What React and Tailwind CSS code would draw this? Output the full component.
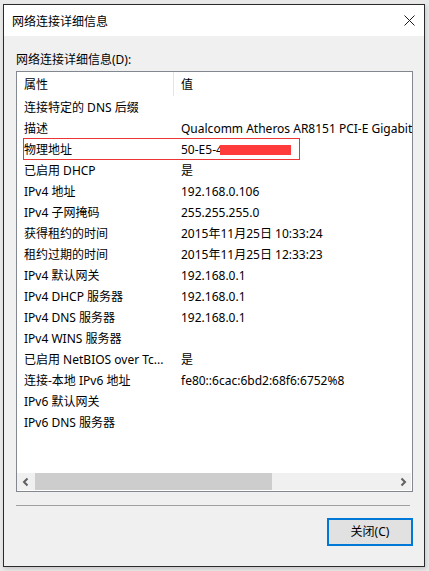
import React from "react";

const rows = [
  ["连接特定的 DNS 后缀", ""],
  ["描述", "Qualcomm Atheros AR8151 PCI-E Gigabit Ethernet Controller (NDIS 6.30)"],
  ["物理地址", "50-E5-4", "mac"],
  ["已启用 DHCP", "是"],
  ["IPv4 地址", "192.168.0.106"],
  ["IPv4 子网掩码", "255.255.255.0"],
  ["获得租约的时间", "2015年11月25日 10:33:24"],
  ["租约过期的时间", "2015年11月25日 12:33:23"],
  ["IPv4 默认网关", "192.168.0.1"],
  ["IPv4 DHCP 服务器", "192.168.0.1"],
  ["IPv4 DNS 服务器", "192.168.0.1"],
  ["IPv4 WINS 服务器", ""],
  ["已启用 NetBIOS over Tc...", "是"],
  ["连接-本地 IPv6 地址", "fe80::6cac:6bd2:68f6:6752%8"],
  ["IPv6 默认网关", ""],
  ["IPv6 DNS 服务器", ""],
];

function Chevron({ dir }) {
  return (
    <svg width="8" height="10" viewBox="0 0 8 10">
      {dir === "left" ? (
        <polyline points="5.5,1.5 2,5 5.5,8.5" fill="none" stroke="#606060" strokeWidth="2" />
      ) : (
        <polyline points="2.5,1.5 6,5 2.5,8.5" fill="none" stroke="#606060" strokeWidth="2" />
      )}
    </svg>
  );
}

export default function App() {
  return (
    <div className="w-[429px] h-[571px] bg-[#e9e9e9] pt-[4px] pl-[3px] font-['Noto_Sans','Noto_Sans_CJK_SC',sans-serif] text-[12px] text-black overflow-hidden">
      <div className="w-[422px] h-[563px] border border-[#2b2b2b] flex flex-col shadow-[1px_2px_4px_rgba(0,0,0,0.15)]">
        {/* Title bar */}
        <div className="h-[31px] bg-white flex items-center justify-between pl-[8px] pr-[9px]">
          <span className="leading-[16px] pt-[2px]">网络连接详细信息</span>
          <svg width="11" height="11" viewBox="0 0 11 11">
            <line x1="0.5" y1="0.5" x2="10.5" y2="10.5" stroke="#1a1a1a" strokeWidth="1" />
            <line x1="10.5" y1="0.5" x2="0.5" y2="10.5" stroke="#1a1a1a" strokeWidth="1" />
          </svg>
        </div>
        {/* Body */}
        <div className="flex-1 bg-[#f0f0f0] pl-[12px] pr-[11px] pt-[15px] flex flex-col">
          <div className="leading-[16px] pt-px -mb-px">网络连接详细信息(D):</div>
          <div className="mt-[4px] w-[397px] h-[421px] border border-[#828790] bg-white flex flex-col overflow-hidden">
            {/* Header */}
            <div className="h-[24px] flex items-stretch shrink-0">
              <div className="w-[156px] pl-[7px] pt-px leading-[24px]">属性</div>
              <div className="flex-1 border-l border-[#e5e5e5] pl-[7px] pt-px leading-[24px]">值</div>
            </div>
            {rows.map(([k, v, tag], i) => (
              <div key={i} className="relative h-[21px] flex shrink-0">
                <div className="w-[156px] pl-[7px] pt-px leading-[21px] whitespace-nowrap overflow-hidden">{k}</div>
                <div className="relative flex-1 min-w-0 pl-[8px] pt-px leading-[21px] whitespace-nowrap overflow-hidden">
                  {v}
                  {tag === "mac" && (
                    <span className="absolute left-[47px] top-[7px] w-[71px] h-[10px] bg-[#ff3b3b]" />
                  )}
                </div>
                {tag === "mac" && (
                  <span className="absolute left-[6px] top-0 w-[277px] h-[22px] border border-[#ee3535] pointer-events-none" />
                )}
              </div>
            ))}
            <div className="flex-1" />
            {/* Horizontal scrollbar */}
            <div className="h-[17px] mr-px mb-px bg-[#f0f0f0] flex items-center shrink-0">
              <div className="w-[18px] h-full flex items-center justify-center">
                <Chevron dir="left" />
              </div>
              <div className="w-[237px] h-full bg-[#cdcdcd]" />
              <div className="flex-1" />
              <div className="w-[17px] h-full flex items-center justify-center">
                <Chevron dir="right" />
              </div>
            </div>
          </div>
          {/* Separator */}
          <div className="mt-[13px] w-[394px] h-px bg-[#a0a0a0]" />
          {/* Button */}
          <div className="mt-[12px] flex justify-end">
            <div className="w-[86px] h-[28px] border-2 border-[#0078d7] bg-[#e1e1e1] flex items-center justify-center leading-[16px]">
              关闭(C)
            </div>
          </div>
        </div>
      </div>
    </div>
  );
}
